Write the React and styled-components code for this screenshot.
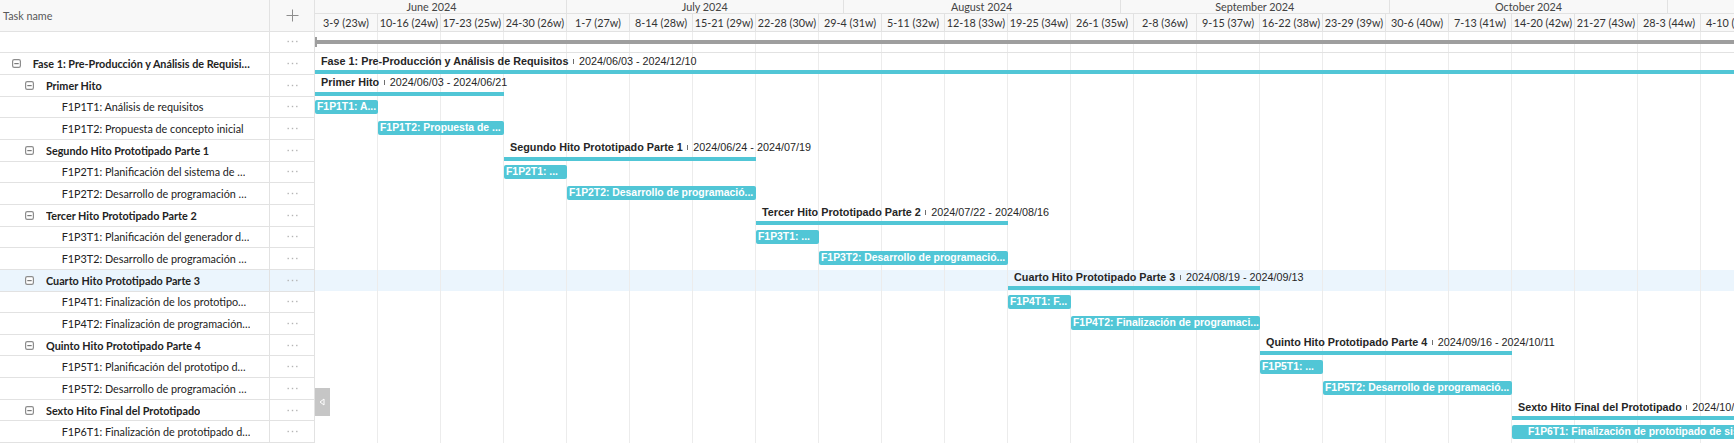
import React from "react";
import styled, { createGlobalStyle } from "styled-components";

const ROW = 21.667;
const WEEK = 63;

const GlobalStyle = createGlobalStyle`
  html, body {
    margin: 0;
    padding: 0;
    background: #ffffff;
  }
  body {
    font-family: Lato, "Noto Sans", sans-serif;
    overflow: hidden;
  }
`;

const weeks = [
  "3-9 (23w)", "10-16 (24w)", "17-23 (25w)", "24-30 (26w)", "1-7 (27w)",
  "8-14 (28w)", "15-21 (29w)", "22-28 (30w)", "29-4 (31w)", "5-11 (32w)",
  "12-18 (33w)", "19-25 (34w)", "26-1 (35w)", "2-8 (36w)", "9-15 (37w)",
  "16-22 (38w)", "23-29 (39w)", "30-6 (40w)", "7-13 (41w)", "14-20 (42w)",
  "21-27 (43w)", "28-3 (44w)", "4-10 (45w)",
];

const months = [
  { label: "June 2024", width: 270 },
  { label: "July 2024", width: 276.6 },
  { label: "August 2024", width: 277 },
  { label: "September 2024", width: 269.4 },
  { label: "October 2024", width: 278 },
  { label: "November 2024", width: 270 },
];

const rows = [
  { name: "Fase 1: Pre-Producción y Análisis de Requisi…", level: 0, group: true, label: "Fase 1: Pre-Producción y Análisis de Requisitos", dates: "2024/06/03 - 2024/12/10", start: 0, span: 27 },
  { name: "Primer Hito", level: 1, group: true, label: "Primer Hito", dates: "2024/06/03 - 2024/06/21", start: 0, span: 3 },
  { name: "F1P1T1: Análisis de requisitos", level: 2, label: "F1P1T1: A...", start: 0, span: 1 },
  { name: "F1P1T2: Propuesta de concepto inicial", level: 2, label: "F1P1T2: Propuesta de ...", start: 1, span: 2 },
  { name: "Segundo Hito Prototipado Parte 1", level: 1, group: true, label: "Segundo Hito Prototipado Parte 1", dates: "2024/06/24 - 2024/07/19", start: 3, span: 4 },
  { name: "F1P2T1: Planificación del sistema de …", level: 2, label: "F1P2T1: ...", start: 3, span: 1 },
  { name: "F1P2T2: Desarrollo de programación …", level: 2, label: "F1P2T2: Desarrollo de programació...", start: 4, span: 3 },
  { name: "Tercer Hito Prototipado Parte 2", level: 1, group: true, label: "Tercer Hito Prototipado Parte 2", dates: "2024/07/22 - 2024/08/16", start: 7, span: 4 },
  { name: "F1P3T1: Planificación del generador d…", level: 2, label: "F1P3T1: ...", start: 7, span: 1 },
  { name: "F1P3T2: Desarrollo de programación …", level: 2, label: "F1P3T2: Desarrollo de programació...", start: 8, span: 3 },
  { name: "Cuarto Hito Prototipado Parte 3", level: 1, group: true, selected: true, label: "Cuarto Hito Prototipado Parte 3", dates: "2024/08/19 - 2024/09/13", start: 11, span: 4 },
  { name: "F1P4T1: Finalización de los prototipo…", level: 2, label: "F1P4T1: F...", start: 11, span: 1 },
  { name: "F1P4T2: Finalización de programación…", level: 2, label: "F1P4T2: Finalización de programaci...", start: 12, span: 3 },
  { name: "Quinto Hito Prototipado Parte 4", level: 1, group: true, label: "Quinto Hito Prototipado Parte 4", dates: "2024/09/16 - 2024/10/11", start: 15, span: 4 },
  { name: "F1P5T1: Planificación del prototipo d…", level: 2, label: "F1P5T1: ...", start: 15, span: 1 },
  { name: "F1P5T2: Desarrollo de programación …", level: 2, label: "F1P5T2: Desarrollo de programació...", start: 16, span: 3 },
  { name: "Sexto Hito Final del Prototipado", level: 1, group: true, label: "Sexto Hito Final del Prototipado", dates: "2024/10/14 - 2024/11/08", start: 19, span: 4 },
  { name: "F1P6T1: Finalización de prototipado d…", level: 2, label: "F1P6T1: Finalización de prototipado de sistemas", start: 19, span: 4, inset: 16 },
];

function Expander() {
  return (
    <ExpanderIcon viewBox="0 0 9 9" width="9" height="9">
      <rect x="0.6" y="0.6" width="7.8" height="7.8" rx="1.6" fill="#fff" stroke="#8c8c8c" strokeWidth="1.2" />
      <rect x="2.3" y="4" width="4.4" height="1.2" fill="#7a7a7a" />
    </ExpanderIcon>
  );
}

function Dots() {
  return (
    <svg viewBox="0 0 11 3" width="11" height="3">
      <rect x="0.5" y="0.8" width="1.4" height="1.4" fill="#b5b5b5" />
      <rect x="4.8" y="0.8" width="1.4" height="1.4" fill="#b5b5b5" />
      <rect x="9.1" y="0.8" width="1.4" height="1.4" fill="#b5b5b5" />
    </svg>
  );
}

function App() {
  return (
    <>
      <GlobalStyle />
      <Page>
        <Grid>
          <GridHeader>
            <NameHead>Task name</NameHead>
            <AddHead>
              <svg viewBox="0 0 13 13" width="13" height="13">
                <rect x="6" y="0.5" width="1" height="12" fill="#8e8e8e" />
                <rect x="0.5" y="6" width="12" height="1" fill="#8e8e8e" />
              </svg>
            </AddHead>
          </GridHeader>
          <GridRow>
            <NameCell $pad={0} />
            <MenuCell><Dots /></MenuCell>
          </GridRow>
          {rows.map((r) => (
            <GridRow key={r.name} $selected={r.selected}>
              <NameCell $pad={r.group ? 12 + r.level * 13.3 : 61.7}>
                {r.group && <Expander />}
                <NameText $bold={r.group}>{r.name}</NameText>
              </NameCell>
              <MenuCell><Dots /></MenuCell>
            </GridRow>
          ))}
        </Grid>

        <Chart>
          <Scale>
            <MonthRow>
              {months.map((m, i) => (
                <MonthCell key={m.label} $first={i === 0} style={{ width: m.width }}>
                  {m.label}
                </MonthCell>
              ))}
            </MonthRow>
            <WeekRow>
              {weeks.map((w) => (
                <WeekCell key={w}>{w}</WeekCell>
              ))}
            </WeekRow>
          </Scale>

          <SummaryRow>
            <SummaryBar />
          </SummaryRow>

          {rows.map((r) => (
            <ChartRow key={r.name} $selected={r.selected}>
              {r.group ? (
                <GroupBox style={{ left: r.start * WEEK, width: r.span * WEEK }}>
                  <GroupLabel>
                    <b>{r.label}</b>
                    <Tick />
                    <span>{r.dates}</span>
                  </GroupLabel>
                  <GroupLine />
                </GroupBox>
              ) : (
                <TaskBar style={{ left: r.start * WEEK, width: r.span * WEEK }} $inset={r.inset}>
                  {r.label}
                </TaskBar>
              )}
            </ChartRow>
          ))}

          <Handle>
            <svg viewBox="0 0 6 8" width="6" height="8">
              <path d="M5 1 L1 4 L5 7 Z" fill="none" stroke="#ffffff" strokeWidth="1" />
            </svg>
          </Handle>
        </Chart>
      </Page>
    </>
  );
}

const Page = styled.div`
  display: flex;
  width: 1734px;
  height: 443px;
  overflow: hidden;
  background: #ffffff;
`;

const Grid = styled.div`
  width: 315px;
  flex: none;
  display: flex;
  flex-direction: column;
  border-right: 1px solid #e2e2e2;
  box-sizing: border-box;
`;

const GridHeader = styled.div`
  display: flex;
  height: 31.67px;
  box-sizing: border-box;
  background: #f8f8f8;
  border-bottom: 1px solid #e2e2e2;
`;

const NameHead = styled.div`
  width: 270px;
  box-sizing: border-box;
  border-right: 1px solid #e2e2e2;
  padding-left: 3px;
  display: flex;
  align-items: center;
  font-size: 10.8px;
  color: #595959;
`;

const AddHead = styled.div`
  flex: 1;
  display: flex;
  align-items: center;
  justify-content: center;
`;

const GridRow = styled.div`
  display: flex;
  height: ${ROW}px;
  box-sizing: border-box;
  border-bottom: 1px solid #e2e2e2;
  background: ${(p) => (p.$selected ? "#ebf5fd" : "#ffffff")};
`;

const NameCell = styled.div`
  width: 270px;
  box-sizing: border-box;
  border-right: 1px solid #e2e2e2;
  padding-left: ${(p) => p.$pad}px;
  padding-right: 12px;
  display: flex;
  align-items: center;
  min-width: 0;
`;

const ExpanderIcon = styled.svg`
  flex: none;
  margin-right: 11.7px;
`;

const NameText = styled.span`
  font-size: 10.8px;
  font-weight: ${(p) => (p.$bold ? 700 : 400)};
  color: #222222;
  white-space: nowrap;
  overflow: hidden;
  text-overflow: ellipsis;
`;

const MenuCell = styled.div`
  flex: 1;
  display: flex;
  align-items: center;
  justify-content: center;
`;

const Chart = styled.div`
  position: relative;
  flex: 1;
  min-width: 0;
  overflow: hidden;
  display: flex;
  flex-direction: column;
`;

const Scale = styled.div`
  height: 31.67px;
  box-sizing: border-box;
  background: #f8f8f8;
  border-bottom: 1px solid #e2e2e2;
  display: flex;
  flex-direction: column;
`;

const MonthRow = styled.div`
  display: flex;
  height: 14px;
  box-sizing: border-box;
  border-bottom: 1px solid #e2e2e2;
`;

const MonthCell = styled.div`
  flex: none;
  margin-left: ${(p) => (p.$first ? "-18px" : "0")};
  box-sizing: border-box;
  border-right: 1px solid #e2e2e2;
  text-align: center;
  font-size: 10.8px;
  line-height: 13px;
  color: #444444;
  white-space: nowrap;
`;

const WeekRow = styled.div`
  display: flex;
  flex: 1;
`;

const WeekCell = styled.div`
  flex: none;
  width: ${WEEK}px;
  box-sizing: border-box;
  border-right: 1px solid #e2e2e2;
  display: flex;
  align-items: center;
  justify-content: center;
  font-size: 10.8px;
  color: #333333;
  white-space: nowrap;
`;

const weekLines = `repeating-linear-gradient(to right, transparent 0 ${WEEK - 1}px, #ececec ${WEEK - 1}px ${WEEK}px)`;

const SummaryRow = styled.div`
  position: relative;
  flex: none;
  height: ${ROW}px;
  box-sizing: border-box;
  border-bottom: 1px solid #e2e2e2;
  background-image: ${weekLines};
`;

const SummaryBar = styled.div`
  position: absolute;
  left: 0;
  right: 0;
  top: 8.3px;
  height: 4px;
  background: #9e9e9e;
  &::before {
    content: "";
    position: absolute;
    left: 0;
    top: -2.7px;
    width: 2px;
    height: 9.4px;
    background: #9e9e9e;
  }
`;

const ChartRow = styled.div`
  position: relative;
  flex: none;
  height: ${ROW}px;
  background-color: ${(p) => (p.$selected ? "#ebf5fd" : "#ffffff")};
  background-image: ${weekLines};
`;

const GroupBox = styled.div`
  position: absolute;
  top: 0;
  bottom: 0;
`;

const GroupLabel = styled.div`
  position: absolute;
  left: 6px;
  top: 1.5px;
  display: flex;
  align-items: center;
  white-space: nowrap;
  font-family: "Liberation Sans", Arial, sans-serif;
  font-size: 10.8px;
  line-height: 13px;
  color: #262626;
  b {
    font-weight: 700;
  }
`;

const Tick = styled.i`
  display: inline-block;
  width: 1px;
  height: 5px;
  margin: 0 5px 0 4.5px;
  background: #6e6e6e;
`;

const GroupLine = styled.div`
  position: absolute;
  left: 0;
  right: 0;
  top: 16.7px;
  height: 4px;
  background: #51c6d6;
`;

const TaskBar = styled.div`
  position: absolute;
  top: 3.2px;
  height: 14px;
  box-sizing: border-box;
  padding: 0 1px 0 ${(p) => p.$inset || 2}px;
  border-radius: 2px;
  background: #51c6d6;
  color: #ffffff;
  font-family: "Liberation Sans", Arial, sans-serif;
  font-weight: 700;
  font-size: 10.4px;
  line-height: 14px;
  white-space: nowrap;
  overflow: hidden;
`;

const Handle = styled.div`
  position: absolute;
  left: -1px;
  top: 388px;
  width: 16px;
  height: 28px;
  background: #c6c6c6;
  display: flex;
  align-items: center;
  justify-content: center;
`;

export default App;
